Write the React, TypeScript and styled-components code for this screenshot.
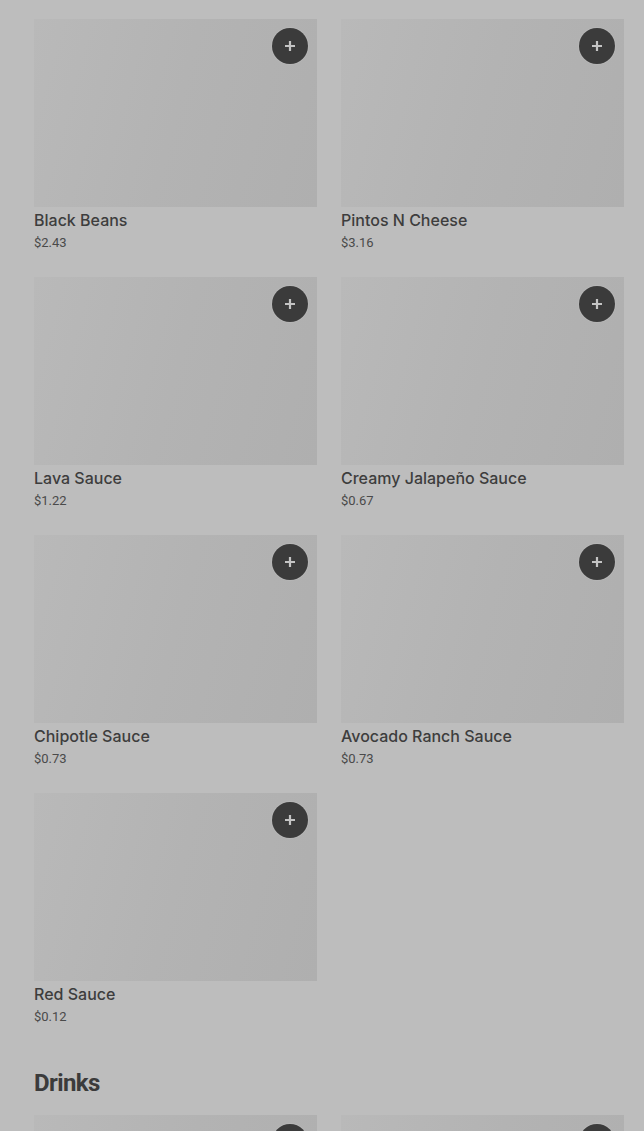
import React from 'react'
import styled, { createGlobalStyle } from 'styled-components'

const GlobalStyle = createGlobalStyle`
  html, body {
    margin: 0;
    padding: 0;
    background: #bdbdbd;
    font-family: Roboto, "Noto Sans", sans-serif;
    overflow: hidden;
  }
`

interface Item {
  name: string
  price: string
}

const sides: Item[] = [
  { name: 'Black Beans', price: '$2.43' },
  { name: 'Pintos N Cheese', price: '$3.16' },
  { name: 'Lava Sauce', price: '$1.22' },
  { name: 'Creamy Jalapeño Sauce', price: '$0.67' },
  { name: 'Chipotle Sauce', price: '$0.73' },
  { name: 'Avocado Ranch Sauce', price: '$0.73' },
  { name: 'Red Sauce', price: '$0.12' },
]

const drinks: Item[] = [
  { name: 'Pepsi', price: '$2.49' },
  { name: 'Mountain Dew', price: '$2.49' },
]

const Page = styled.div`
  padding: 19px 20px 40px 34px;
`

const Grid = styled.div`
  display: grid;
  grid-template-columns: 283px 283px;
  column-gap: 24px;
  row-gap: 26px;
`

const Card = styled.div`
  display: flex;
  flex-direction: column;
`

const ImageBox = styled.div`
  position: relative;
  height: 188px;
  background: linear-gradient(105deg, #b9b9b9 0%, #b3b3b3 50%, #afafaf 100%);
`

const AddButton = styled.button`
  position: absolute;
  top: 9px;
  right: 9px;
  width: 36px;
  height: 36px;
  border-radius: 50%;
  border: none;
  padding: 0;
  background: #3b3b3b;
  display: flex;
  align-items: center;
  justify-content: center;
  box-shadow: 0 0 0 1px rgba(255, 255, 255, 0.08);
`

const Name = styled.div`
  margin-top: 3px;
  font-family: Inter, "Noto Sans", sans-serif;
  font-size: 16px;
  line-height: 20px;
  font-weight: 500;
  color: #3d3d3d;
`

const Price = styled.div`
  margin-top: 4px;
  font-size: 13px;
  line-height: 17px;
  color: #4a4a4a;
`

const Heading = styled.h2`
  margin: 42px 0 16px;
  font-size: 24px;
  line-height: 32px;
  font-weight: 700;
  letter-spacing: -0.6px;
  color: #3b3b3b;
`

const Plus = () => (
  <svg width="14" height="14" viewBox="0 0 14 14">
    <path d="M7 2v10M2 7h10" stroke="#c4c4c4" strokeWidth="2.2" strokeLinecap="butt" />
  </svg>
)

const ItemCard: React.FC<{ item: Item }> = ({ item }) => (
  <Card>
    <ImageBox>
      <AddButton aria-label={`Add ${item.name}`}>
        <Plus />
      </AddButton>
    </ImageBox>
    <Name>{item.name}</Name>
    <Price>{item.price}</Price>
  </Card>
)

export default function App() {
  return (
    <>
      <GlobalStyle />
      <Page>
        <Grid>
          {sides.map((item) => (
            <ItemCard key={item.name} item={item} />
          ))}
        </Grid>
        <Heading>Drinks</Heading>
        <Grid>
          {drinks.map((item) => (
            <ItemCard key={item.name} item={item} />
          ))}
        </Grid>
      </Page>
    </>
  )
}
